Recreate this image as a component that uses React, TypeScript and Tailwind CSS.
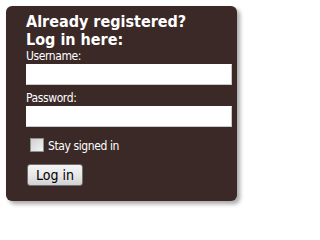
export default function App() {
  return (
    <div className="h-[214px] w-[248px] bg-white pl-[6px] pt-[6px] font-['DejaVu_Sans_Condensed','DejaVu_Sans',sans-serif]">
      <form
        onSubmit={(e) => e.preventDefault()}
        className="flex h-[195px] w-[231px] flex-col rounded-[6px] bg-[#3b2927] pl-[20px] pt-[7px] text-white shadow-[3px_3px_4px_rgba(0,0,0,0.35)]"
      >
        <h2 className="text-[16px] font-bold leading-[18px]">
          Already registered?
          <br />
          Log in here:
        </h2>

        <label className="text-[12px] leading-[15px] tracking-[-0.4px]">Username:</label>
        <input
          type="text"
          className="h-[21px] w-[206px] border border-[#c9c9c9] border-l-white border-t-white bg-white px-1 text-[12px] text-black outline-none"
        />

        <label className="mt-[6px] text-[12px] leading-[15px] tracking-[-0.4px]">Password:</label>
        <input
          type="password"
          className="h-[21px] w-[206px] border border-[#c9c9c9] border-l-white border-t-white bg-white px-1 text-[12px] text-black outline-none"
        />

        <label className="mt-[11px] flex h-[14px] items-start gap-[4px] pl-[4px] text-[12px] tracking-[-0.4px]">
          <span className="h-[14px] w-[14px] border border-[#8e8f8f] bg-gradient-to-br from-[#cfcfcf] to-[#f4f4f4]" />
          <span className="pt-[2px] leading-[13px]">Stay signed in</span>
        </label>

        <button
          type="submit"
          className="mt-[12px] ml-[1px] h-[22px] w-[56px] rounded-[3px] border border-[#707070] bg-gradient-to-b from-[#f4f4f4] via-[#e8e8e8] to-[#d2d2d2] text-[14px] leading-[18px] text-black"
        >
          Log in
        </button>
      </form>
    </div>
  );
}
